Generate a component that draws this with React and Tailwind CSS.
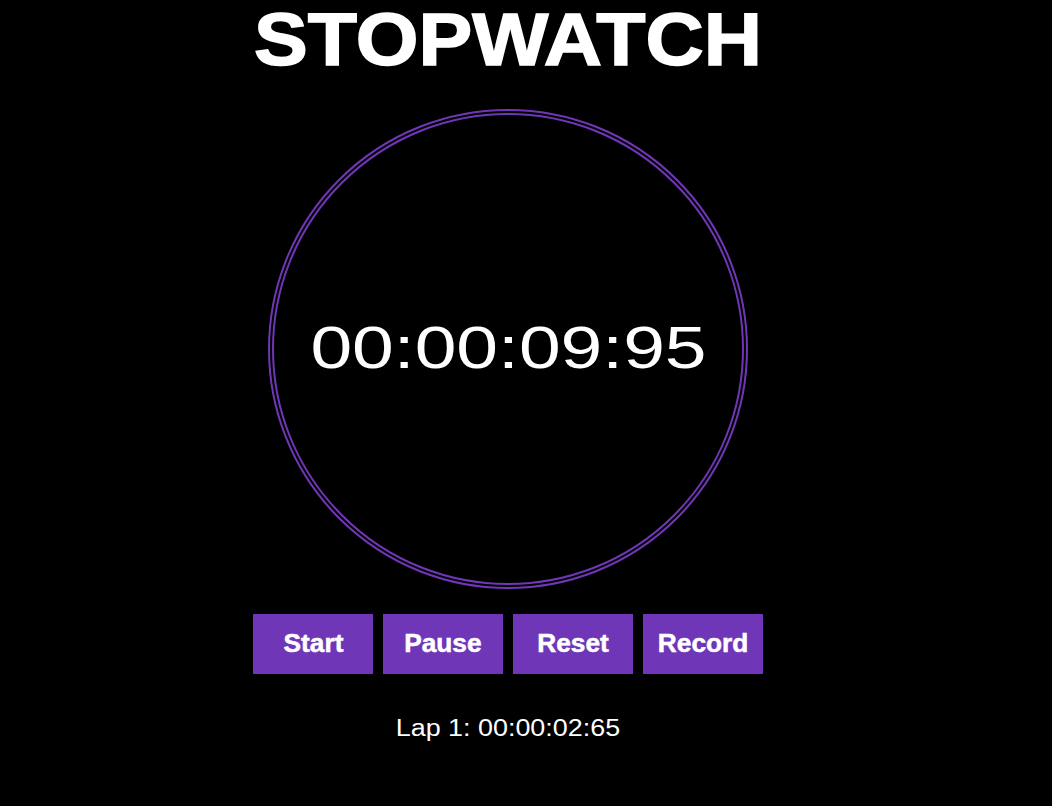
const buttons = ['Start', 'Pause', 'Reset', 'Record']

export default function App() {
  return (
    <div className="min-h-[806px] w-full bg-black text-white font-['Liberation_Sans',Arial,sans-serif]">
      <div className="w-[1016px] flex flex-col items-center pt-[3px]">
        <h1 className="text-[74px] font-bold leading-none [-webkit-text-stroke:1.5px_white]">
          <span className="inline-block scale-x-[1.09]">STOPWATCH</span>
        </h1>
        <div className="mt-[32px] w-[480px] h-[480px] rounded-full border-[6px] border-double border-[#7036b8] flex items-center justify-center">
          <span className="inline-block text-[60px] leading-none scale-x-[1.25] -mt-[3px]">00:00:09:95</span>
        </div>
        <div className="mt-[25px] flex gap-[10px]">
          {buttons.map((b) => (
            <button
              key={b}
              className="w-[120px] h-[60px] bg-[#7036b8] text-white text-[25px] font-bold flex items-center justify-center [-webkit-text-stroke:0.5px_white]"
            >
              <span className="inline-block scale-x-[1.05]">{b}</span>
            </button>
          ))}
        </div>
        <p className="mt-[43px] text-[23px] leading-none">
          <span className="inline-block scale-x-[1.17]">Lap 1: 00:00:02:65</span>
        </p>
      </div>
    </div>
  )
}
